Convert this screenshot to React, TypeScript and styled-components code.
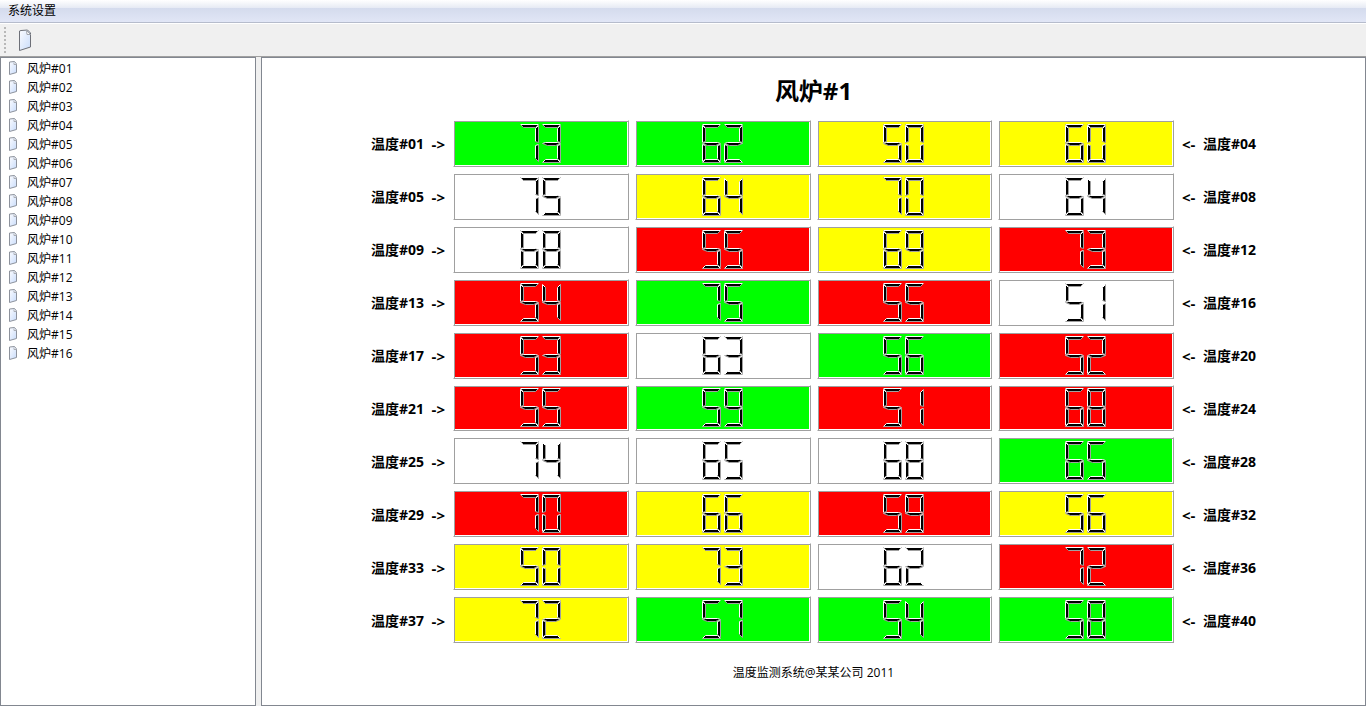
import React from "react";
import styled, { createGlobalStyle } from "styled-components";

const GlobalStyle = createGlobalStyle`
  * { box-sizing: border-box; }
  body {
    margin: 0;
    background: #f0f0f0;
    color: #000;
    font: 12px/19px "Open Sans", "Noto Sans CJK SC", sans-serif;
  }
`;

const Window = styled.div`
  display: flex;
  flex-direction: column;
  min-height: 100vh;
`;

const MenuBar = styled.nav`
  display: flex;
  height: 23px;
  padding: 0 4px;
  border-bottom: 1px solid #b6bccc;
  background: linear-gradient(#ffffff 0, #e6eaf4 8px, #d4dbed 8px, #e1e6f6 100%);
`;

const MenuButton = styled.button`
  height: 21px;
  padding: 0 4px;
  border: 0;
  background: none;
  color: inherit;
  font: inherit;
`;

const ToolBar = styled.div`
  display: flex;
  align-items: center;
  gap: 12px;
  height: 34px;
  padding-left: 4px;
  border-top: 1px solid #fff;
  border-bottom: 1px solid #a0a0a0;
`;

const Grip = styled.span`
  width: 2px;
  height: 26px;
  background: repeating-linear-gradient(#b8b8b8 0 2px, transparent 2px 4px);
`;

const ToolButton = styled.button`
  display: flex;
  padding: 0;
  border: 0;
  background: none;
`;

const Body = styled.div`
  display: flex;
  flex: 1;
  gap: 5px;
`;

const Sidebar = styled.ul`
  width: 256px;
  margin: 0;
  padding: 1px 0 0 7px;
  border: 1px solid #828790;
  background: #fff;
  list-style: none;
`;

const FurnaceItem = styled.li`
  display: flex;
  align-items: center;
  gap: 8px;
  height: 19px;
`;

const Panel = styled.main`
  display: flex;
  flex: 1;
  flex-direction: column;
  padding: 15px 109px 22px;
  border: 1px solid #828790;
  background: #fff;
`;

const Title = styled.h1`
  margin: 0 0 11px;
  font-size: 24px;
  line-height: 36px;
  text-align: center;
`;

const Readings = styled.div`
  display: grid;
  flex: 1;
  grid-template-columns: 76px repeat(4, 1fr) 76px;
  grid-auto-rows: 1fr;
  gap: 6px;
`;

const Label = styled.div<{ $side: "left" | "right" }>`
  display: flex;
  align-items: center;
  justify-content: space-between;
  padding: ${(p) => (p.$side === "left" ? "2px 2px 0 0" : "2px 0 0 2px")};
  font-size: 14px;
  font-weight: 700;
  line-height: 20px;
  white-space: nowrap;
`;

const Arrow = styled.span`
  font-size: 15px;
`;

const Cell = styled.div<{ $color: string }>`
  display: flex;
  align-items: center;
  justify-content: center;
  border: 1px solid;
  border-color: #fff #a0a0a0 #a0a0a0 #fff;
  background: ${(p) => p.$color};
  box-shadow: inset 1px 1px #a0a0a0, inset -1px -1px #fff;
`;

const Footer = styled.footer`
  margin-top: 20px;
  line-height: 20px;
  text-align: center;
`;

const PageIcon = ({ small = false }: { small?: boolean }) => (
  <svg width={small ? 11 : 14} height={small ? 17 : 24} viewBox={small ? "0 0 11 17" : "0 0 14 24"} aria-hidden="true">
    <defs>
      <linearGradient id="paper" x1="0" y1="0" x2="1" y2="1">
        <stop offset="0" stopColor="#fbfcff" />
        <stop offset="1" stopColor="#c9dcfb" />
      </linearGradient>
    </defs>
    {small ? (
      <>
        <path d="M1.5 2 L6.5 1.5 L8.5 4 V12.5 L1.5 14.5Z" fill="url(#paper)" stroke="#8d929c" />
        <path d="M6 2.5V4.5H8.5" fill="#fff" stroke="#a9adb5" />
      </>
    ) : (
      <>
        <path d="M1.5 3 L3 2.5 L9.5 2 L12.5 5 V19 L1.5 22.5Z" fill="url(#paper)" stroke="#6d7078" />
        <path d="M8.5 2.5L9 6.5H12.5Z" fill="#fff" stroke="#a3a6ad" />
      </>
    )}
  </svg>
);

type Segment = { fill: string; light: string; dark: string };

// Bevelled strokes of one 19 x 39 digit: top, upper left, upper right, middle,
// lower left, lower right, bottom.
const SEGMENTS: Segment[] = [
  { fill: "M0 0H18L15 3H3Z", light: "M0 0H18", dark: "M18 0L15 3H3L0 0" },
  { fill: "M0 1L3 4V17L0 18Z", light: "M0 18V1L3 4", dark: "M3 4V17L0 18" },
  { fill: "M18 1V18L15 17V4Z", light: "M15 17V4L18 1", dark: "M18 1V18L15 17" },
  { fill: "M0 19L3 18H15L18 19L13 21H5Z", light: "M0 19L3 18H15L18 19", dark: "M18 19L13 21H5L0 19" },
  { fill: "M0 20L3 21V34L0 37Z", light: "M0 37V20L3 21", dark: "M3 21V34L0 37" },
  { fill: "M18 20V37L15 34V21Z", light: "M15 34V21L18 20", dark: "M18 20V37L15 34" },
  { fill: "M0 38L3 35H15L18 38Z", light: "M0 38L3 35H15L18 38", dark: "M18 38H0" },
];

const DIGITS: Record<string, number[]> = {
  "0": [0, 1, 2, 4, 5, 6],
  "1": [2, 5],
  "2": [0, 2, 3, 4, 6],
  "3": [0, 2, 3, 5, 6],
  "4": [1, 2, 3, 5],
  "5": [0, 1, 3, 5, 6],
  "6": [0, 1, 3, 4, 5, 6],
  "7": [0, 2, 5],
  "8": [0, 1, 2, 3, 4, 5, 6],
  "9": [0, 1, 2, 3, 5, 6],
};

const Lcd = ({ value }: { value: number }) => (
  <svg width="42" height="39" viewBox="0 0 42 39" role="img" aria-label={String(value)}>
    {String(value).split("").map((digit, i) => (
      <g key={i} transform={`translate(${i * 22 + 0.5} 0.5)`} fill="none">
        {DIGITS[digit].map((s) => (
          <g key={s}>
            <path d={SEGMENTS[s].fill} fill="#000" />
            <path d={SEGMENTS[s].light} stroke="#fff" />
            <path d={SEGMENTS[s].dark} stroke="#a0a0a0" />
          </g>
        ))}
      </g>
    ))}
  </svg>
);

const COLORS: Record<string, string> = { g: "#00ff00", y: "#ffff00", r: "#ff0000", w: "#ffffff" };

const ROWS = [
  "g73 g62 y50 y60",
  "w75 y64 y70 w64",
  "w68 r55 y69 r73",
  "r54 g75 r55 w51",
  "r53 w63 g56 r52",
  "r55 g59 r51 r68",
  "w74 w65 w68 g65",
  "r70 y66 r59 y56",
  "y50 y73 w62 r72",
  "y72 g57 g54 g58",
].map((row) => row.split(" ").map((c) => ({ color: COLORS[c[0]], value: Number(c.slice(1)) })));

const pad = (n: number) => String(n).padStart(2, "0");

export default function App() {
  return (
    <Window>
      <GlobalStyle />
      <MenuBar>
        <MenuButton>系统设置</MenuButton>
      </MenuBar>
      <ToolBar>
        <Grip />
        <ToolButton aria-label="新建">
          <PageIcon />
        </ToolButton>
      </ToolBar>
      <Body>
        <Sidebar>
          {Array.from({ length: 16 }, (_, i) => (
            <FurnaceItem key={i}>
              <PageIcon small />
              风炉#{pad(i + 1)}
            </FurnaceItem>
          ))}
        </Sidebar>
        <Panel>
          <Title>风炉#1</Title>
          <Readings>
            {ROWS.map((row, r) => (
              <React.Fragment key={r}>
                <Label $side="left">
                  <span>温度#{pad(r * 4 + 1)}</span>
                  <Arrow>-&gt;</Arrow>
                </Label>
                {row.map((cell, c) => (
                  <Cell key={c} $color={cell.color}>
                    <Lcd value={cell.value} />
                  </Cell>
                ))}
                <Label $side="right">
                  <Arrow>&lt;-</Arrow>
                  <span>温度#{pad(r * 4 + 4)}</span>
                </Label>
              </React.Fragment>
            ))}
          </Readings>
          <Footer>温度监测系统@某某公司 2011</Footer>
        </Panel>
      </Body>
    </Window>
  );
}
